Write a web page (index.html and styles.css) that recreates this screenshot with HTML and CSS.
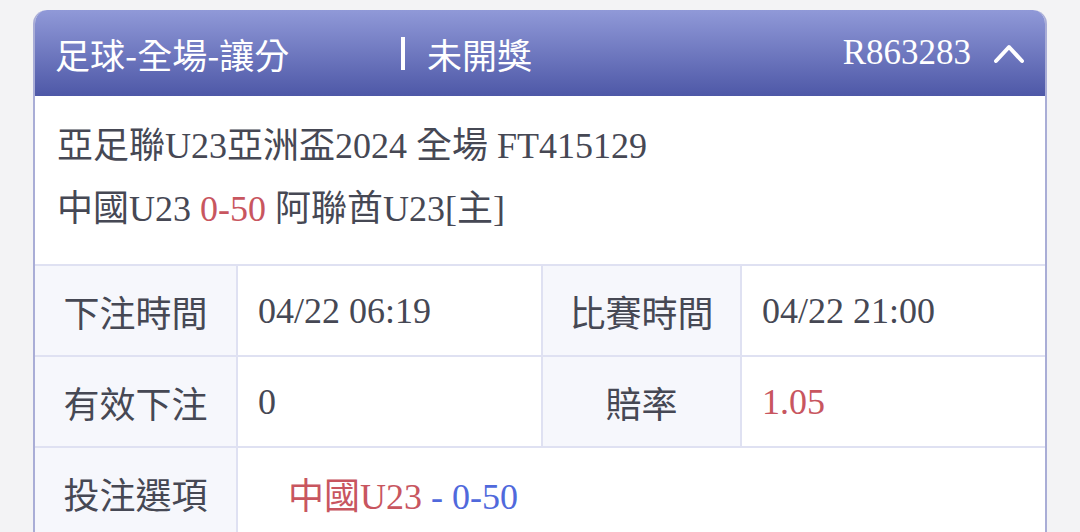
FILE: index.html
```html
<!DOCTYPE html>
<html lang="zh-Hant">
<head>
    <meta charset="UTF-8">
    <meta name="viewport" content="width=device-width, initial-scale=1.0">
    <title>注單詳情</title>
    <link rel="stylesheet" href="styles.css">
</head>
<body>
    <div class="bet-card">
        <div class="bet-header">
            <span class="bet-title">足球-全場-讓分</span>
            <span class="bet-status">未開獎</span>
            <span class="bet-no">R863283</span>
            <svg class="bet-toggle" width="32" height="22" viewBox="0 0 32 22">
                <polyline points="3,19 16,5 29,19" fill="none" stroke="#fff" stroke-width="4" stroke-linecap="round" stroke-linejoin="round"/>
            </svg>
        </div>

        <div class="bet-match">
            <div>亞足聯U23亞洲盃2024 全場 FT415129</div>
            <div>中國U23 <span class="red">0-50</span> 阿聯酋U23[主]</div>
        </div>

        <div class="bet-table">
            <div class="cell label">下注時間</div>
            <div class="cell value">04/22 06:19</div>
            <div class="cell label">比賽時間</div>
            <div class="cell value">04/22 21:00</div>

            <div class="cell label">有效下注</div>
            <div class="cell value">0</div>
            <div class="cell label">賠率</div>
            <div class="cell value red">1.05</div>

            <div class="cell label">投注選項</div>
            <div class="cell value wide"><span><span class="red">中國U23</span> <span class="blue">- 0-50</span></span></div>
        </div>
    </div>
</body>
</html>
```

FILE: styles.css
```css
body {
    margin: 0;
    background-color: #f3f3f5;
    font-family: "Liberation Serif", "Noto Sans CJK TC", serif;
    color: #464854;
}
.bet-card {
    margin: 10px 0 0 33px;
    width: 1010px;
    background-color: white;
    border: 2px solid #a9add6;
    border-top: none;
    border-radius: 14px 14px 0 0;
    overflow: hidden;
}
.bet-header {
    height: 86px;
    display: flex;
    align-items: center;
    padding: 0 22px 0 22px;
    margin: 0 -2px;
    border-radius: 14px 14px 0 0;
    background: linear-gradient(to bottom, #9099d8, #4e58a7);
    color: white;
    font-size: 35px;
}
.bet-title {
    font-family: "Noto Sans CJK TC", sans-serif;
    width: 346px;
}
.bet-status {
    font-family: "Noto Sans CJK TC", sans-serif;
    border-left: 4px solid white;
    padding-left: 22px;
    line-height: 33px;
    height: 33px;
    display: flex;
    align-items: center;
}
.bet-no {
    margin-left: auto;
    margin-right: 22px;
}
.bet-toggle {
    display: block;
}
.bet-match {
    padding: 19px 22px 23px;
    font-size: 36px;
    line-height: 63px;
}
.red {
    color: #c8565f;
}
.blue {
    color: #5069dc;
}
.bet-table {
    display: grid;
    grid-template-columns: 201px 303px 197px 1fr;
    grid-auto-rows: 89px;
    gap: 2px;
    background-color: #dfe1f2;
    border-top: 2px solid #dfe1f2;
    border-bottom: 2px solid #dfe1f2;
    font-size: 36px;
}
.cell {
    display: flex;
    align-items: center;
    background-color: white;
}
.label {
    justify-content: center;
    background-color: #f6f7fc;
}
.value {
    padding-left: 20px;
}
.wide {
    grid-column: 2 / 5;
    padding-left: 50px;
}
```
